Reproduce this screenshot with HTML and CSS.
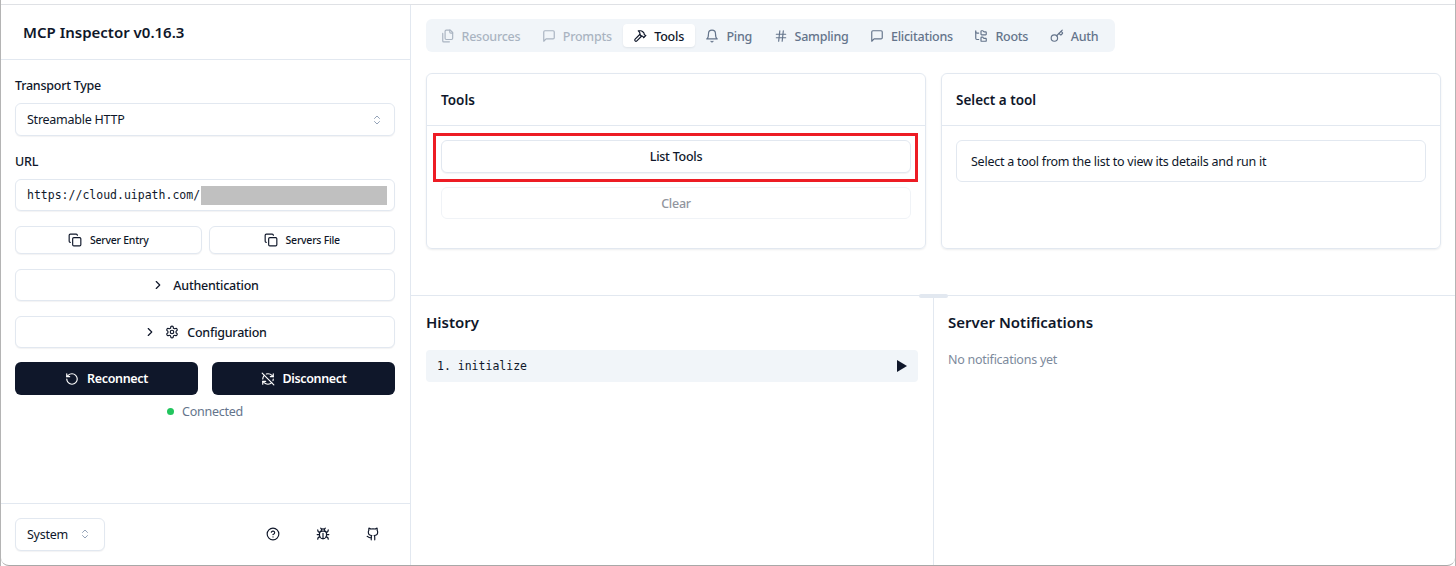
FILE: index.html
```html
<!DOCTYPE html>
<html lang="en">
  <head>
    <meta charset="UTF-8" />
    <title>MCP Inspector</title>
    <link rel="stylesheet" href="styles.css">
  </head>
  <body>
    <svg class="sprite" xmlns="http://www.w3.org/2000/svg">
      <symbol id="i-copy" viewBox="0 0 24 24"><rect x="8" y="8" width="14" height="14" rx="2"/><path d="M4 16c-1.1 0-2-.9-2-2V4c0-1.1.9-2 2-2h10c1.1 0 2 .9 2 2"/></symbol>
      <symbol id="i-files" viewBox="0 0 24 24"><path d="M20 7h-3a2 2 0 0 1-2-2V2"/><path d="M9 18a2 2 0 0 1-2-2V4a2 2 0 0 1 2-2h7l4 4v10a2 2 0 0 1-2 2Z"/><path d="M3 7.6v12.8A1.6 1.6 0 0 0 4.6 22h9.8"/></symbol>
      <symbol id="i-message" viewBox="0 0 24 24"><path d="M21 15a2 2 0 0 1-2 2H7l-4 4V5a2 2 0 0 1 2-2h14a2 2 0 0 1 2 2z"/></symbol>
      <symbol id="i-hammer" viewBox="0 0 24 24"><path d="m15 12-8.373 8.373a1 1 0 1 1-3-3L12 9"/><path d="m18 15 4-4"/><path d="m21.5 11.5-1.914-1.914A2 2 0 0 1 19 8.172V7l-2.26-2.26a6 6 0 0 0-4.202-1.756L9 2.96l.92.82A6.18 6.18 0 0 1 12 8.4V10l2 2h1.172a2 2 0 0 1 1.414.586L18.5 14.5"/></symbol>
      <symbol id="i-bell" viewBox="0 0 24 24"><path d="M6 8a6 6 0 0 1 12 0c0 7 3 9 3 9H3s3-2 3-9"/><path d="M10.3 21a1.94 1.94 0 0 0 3.4 0"/></symbol>
      <symbol id="i-hash" viewBox="0 0 24 24"><path d="M4 9h16"/><path d="M4 15h16"/><path d="M10 3 8 21"/><path d="M16 3l-2 18"/></symbol>
      <symbol id="i-tree" viewBox="0 0 24 24"><path d="M20 10a1 1 0 0 0 1-1V6a1 1 0 0 0-1-1h-2.5a1 1 0 0 1-.8-.4l-.9-1.2A1 1 0 0 0 15 3h-2a1 1 0 0 0-1 1v5a1 1 0 0 0 1 1Z"/><path d="M20 21a1 1 0 0 0 1-1v-3a1 1 0 0 0-1-1h-2.9a1 1 0 0 1-.88-.55l-.42-.85a1 1 0 0 0-.92-.6H13a1 1 0 0 0-1 1v5a1 1 0 0 0 1 1Z"/><path d="M3 5a2 2 0 0 0 2 2h3"/><path d="M3 3v13a2 2 0 0 0 2 2h3"/></symbol>
      <symbol id="i-key" viewBox="0 0 24 24"><path d="m15.5 7.5 2.3 2.3a1 1 0 0 0 1.4 0l2.1-2.1a1 1 0 0 0 0-1.4L19 4"/><path d="m21 2-9.6 9.6"/><circle cx="7.5" cy="15.5" r="5.5"/></symbol>
      <symbol id="i-updown" viewBox="0 0 24 24"><path d="m7 15 5 5 5-5"/><path d="m7 9 5-5 5 5"/></symbol>
      <symbol id="i-chevron" viewBox="0 0 24 24"><path d="m9 18 6-6-6-6"/></symbol>
      <symbol id="i-settings" viewBox="0 0 24 24"><path d="M12.22 2h-.44a2 2 0 0 0-2 2v.18a2 2 0 0 1-1 1.73l-.43.25a2 2 0 0 1-2 0l-.15-.08a2 2 0 0 0-2.73.73l-.22.38a2 2 0 0 0 .73 2.73l.15.1a2 2 0 0 1 1 1.72v.51a2 2 0 0 1-1 1.74l-.15.09a2 2 0 0 0-.73 2.73l.22.38a2 2 0 0 0 2.73.73l.15-.08a2 2 0 0 1 2 0l.43.25a2 2 0 0 1 1 1.73V20a2 2 0 0 0 2 2h.44a2 2 0 0 0 2-2v-.18a2 2 0 0 1 1-1.73l.43-.25a2 2 0 0 1 2 0l.15.08a2 2 0 0 0 2.73-.73l.22-.39a2 2 0 0 0-.73-2.73l-.15-.08a2 2 0 0 1-1-1.74v-.5a2 2 0 0 1 1-1.74l.15-.09a2 2 0 0 0 .73-2.73l-.22-.38a2 2 0 0 0-2.73-.73l-.15.08a2 2 0 0 1-2 0l-.43-.25a2 2 0 0 1-1-1.73V4a2 2 0 0 0-2-2z"/><circle cx="12" cy="12" r="3"/></symbol>
      <symbol id="i-rotate" viewBox="0 0 24 24"><path d="M3 12a9 9 0 1 0 9-9 9.75 9.75 0 0 0-6.74 2.74L3 8"/><path d="M3 3v5h5"/></symbol>
      <symbol id="i-refresh-off" viewBox="0 0 24 24"><path d="M21 8L18.74 5.74A9.75 9.75 0 0 0 12 3C11 3 10.03 3.16 9.13 3.47"/><path d="M8 16H3v5"/><path d="M3 12C3 9.51 4 7.26 5.64 5.64"/><path d="m3 16 2.26 2.26A9.75 9.75 0 0 0 12 21c2.49 0 4.74-1 6.36-2.64"/><path d="M21 12c0 1-.16 1.97-.47 2.87"/><path d="M21 3v5h-5"/><path d="M22 22 2 2"/></symbol>
      <symbol id="i-help" viewBox="0 0 24 24"><circle cx="12" cy="12" r="10"/><path d="M9.09 9a3 3 0 0 1 5.83 1c0 2-3 3-3 3"/><path d="M12 17h.01"/></symbol>
      <symbol id="i-bug" viewBox="0 0 24 24"><path d="m8 2 1.88 1.88"/><path d="M14.12 3.88 16 2"/><path d="M9 7.13v-1a3.003 3.003 0 1 1 6 0v1"/><path d="M12 20c-3.3 0-6-2.7-6-6v-3a4 4 0 0 1 4-4h4a4 4 0 0 1 4 4v3c0 3.3-2.7 6-6 6"/><path d="M12 20v-9"/><path d="M6.53 9C4.6 8.8 3 7.1 3 5"/><path d="M6 13H2"/><path d="M3 21c0-2.1 1.7-3.9 3.8-4"/><path d="M20.97 5c0 2.1-1.6 3.8-3.5 4"/><path d="M22 13h-4"/><path d="M17.2 17c2.1.1 3.8 1.9 3.8 4"/></symbol>
      <symbol id="i-github" viewBox="0 0 24 24"><path d="M15 22v-4a4.8 4.8 0 0 0-1-3.5c3 0 6-2 6-5.5.08-1.25-.27-2.48-1-3.5.28-1.15.28-2.35 0-3.5 0 0-1 0-3 1.5-2.64-.5-5.36-.5-8 0C6 2 5 2 5 2c-.3 1.15-.3 2.35 0 3.5A5.403 5.403 0 0 0 4 9c0 3.5 3 5.5 6 5.5-.39.49-.68 1.05-.85 1.65-.17.6-.22 1.23-.15 1.85v4"/><path d="M9 18c-4.51 2-5-2-7-2"/></symbol>
    </svg>

    <div class="window">
      <aside class="sidebar">
        <div class="brand">MCP Inspector v0.16.3</div>

        <div class="side_body">
          <label class="field_label">Transport Type</label>
          <div class="box select">
            <span>Streamable HTTP</span>
            <svg class="ico ico_sm muted"><use href="#i-updown"/></svg>
          </div>

          <label class="field_label url_label">URL</label>
          <div class="box url_box">
            <span class="mono">https://cloud.uipath.com/</span>
            <span class="redact"></span>
          </div>

          <div class="copy_row">
            <button class="btn btn_small"><svg class="ico"><use href="#i-copy"/></svg>Server Entry</button>
            <button class="btn btn_small"><svg class="ico"><use href="#i-copy"/></svg>Servers File</button>
          </div>

          <button class="btn btn_section"><svg class="ico"><use href="#i-chevron"/></svg>Authentication</button>
          <button class="btn btn_section"><svg class="ico"><use href="#i-chevron"/></svg><svg class="ico"><use href="#i-settings"/></svg>Configuration</button>

          <div class="connect_row">
            <button class="btn_dark"><svg class="ico"><use href="#i-rotate"/></svg>Reconnect</button>
            <button class="btn_dark"><svg class="ico"><use href="#i-refresh-off"/></svg>Disconnect</button>
          </div>

          <div class="status"><span class="dot"></span>Connected</div>
        </div>

        <div class="side_foot">
          <div class="box theme">
            <span>System</span>
            <svg class="ico ico_sm muted"><use href="#i-updown"/></svg>
          </div>
          <div class="foot_icons">
            <svg class="ico"><use href="#i-help"/></svg>
            <svg class="ico"><use href="#i-bug"/></svg>
            <svg class="ico"><use href="#i-github"/></svg>
          </div>
        </div>
      </aside>

      <main class="main">
        <div class="top">
          <nav class="tab_host">
            <div class="tab off"><svg class="ico"><use href="#i-files"/></svg>Resources</div>
            <div class="tab off"><svg class="ico"><use href="#i-message"/></svg>Prompts</div>
            <div class="tab on"><svg class="ico"><use href="#i-hammer"/></svg>Tools</div>
            <div class="tab"><svg class="ico"><use href="#i-bell"/></svg>Ping</div>
            <div class="tab"><svg class="ico"><use href="#i-hash"/></svg>Sampling</div>
            <div class="tab"><svg class="ico"><use href="#i-message"/></svg>Elicitations</div>
            <div class="tab"><svg class="ico"><use href="#i-tree"/></svg>Roots</div>
            <div class="tab"><svg class="ico"><use href="#i-key"/></svg>Auth</div>
          </nav>

          <div class="cards">
            <section class="card">
              <h3 class="card_head">Tools</h3>
              <div class="card_body">
                <div class="list_wrap">
                  <button class="btn btn_wide">List Tools</button>
                  <span class="mark"></span>
                </div>
                <button class="btn btn_clear">Clear</button>
              </div>
            </section>
            <section class="card">
              <h3 class="card_head">Select a tool</h3>
              <div class="card_body">
                <div class="notice">Select a tool from the list to view its details and run it</div>
              </div>
            </section>
          </div>
        </div>

        <div class="bottom">
          <span class="handle"></span>
          <section class="pane pane_left">
            <h2 class="pane_title">History</h2>
            <div class="history_row">
              <span class="mono">1. initialize</span>
              <span class="arrow"></span>
            </div>
          </section>
          <section class="pane">
            <h2 class="pane_title">Server Notifications</h2>
            <p class="empty">No notifications yet</p>
          </section>
        </div>
      </main>
    </div>
  </body>
</html>
```

FILE: styles.css
```css
* {
  box-sizing: border-box;
}

html,
body {
  height: 100%;
  margin: 0;
  overflow: hidden;
  background: #fff;
}

body {
  padding-top: 4px;
  border-left: 1px solid #b4b4b4;
  border-right: 1px solid #b4b4b4;
  font-family: "Noto Sans", "Liberation Sans", sans-serif;
  font-size: 12.5px;
  letter-spacing: -0.25px;
  color: #0f172a;
}

.sprite {
  display: none;
}

.ico {
  width: 14px;
  height: 14px;
  flex: none;
  fill: none;
  stroke: currentColor;
  stroke-width: 2;
  stroke-linecap: round;
  stroke-linejoin: round;
}

.ico_sm {
  width: 12px;
  height: 12px;
}

.muted {
  color: #94a3b8;
}

.mono {
  font-family: "DejaVu Sans Mono", monospace;
  font-size: 11.5px;
  letter-spacing: 0;
}

.window {
  display: flex;
  height: 562px;
  border-top: 1px solid #dfe1e5;
  border-bottom: 1px solid #a8a8a8;
  border-radius: 0 0 8px 8px;
  overflow: hidden;
}

/* sidebar */
.sidebar {
  display: flex;
  flex-direction: column;
  width: 410px;
  flex: none;
  border-right: 1px solid #e2e8f0;
}

.brand {
  height: 55px;
  padding: 17px 0 0 22px;
  border-bottom: 1px solid #e2e8f0;
  font-size: 15px;
  font-weight: 600;
  line-height: 20px;
  letter-spacing: 0;
}

.side_body {
  flex: 1;
  padding: 17px 15px 0 14px;
}

.field_label {
  display: block;
  height: 18px;
  margin-bottom: 8px;
  font-weight: 500;
  line-height: 18px;
}

.url_label {
  margin-top: 17px;
}

.box {
  display: flex;
  align-items: center;
  border: 1px solid #e2e8f0;
  border-radius: 6px;
  background: #fff;
  box-shadow: 0 1px 1px rgba(15, 23, 42, 0.05);
}

.select {
  justify-content: space-between;
  height: 33px;
  padding: 0 11px;
}

.url_box {
  height: 32px;
  padding: 0 7px 0 11px;
}

.redact {
  width: 186px;
  height: 19px;
  margin-left: 1px;
  background: #c0c0c0;
}

.btn {
  display: flex;
  align-items: center;
  justify-content: center;
  width: 100%;
  border: 1px solid #e2e8f0;
  border-radius: 6px;
  background: #fff;
  box-shadow: 0 1px 1px rgba(15, 23, 42, 0.05);
  font-family: inherit;
  font-size: 12.5px;
  font-weight: 500;
  letter-spacing: inherit;
  color: #0f172a;
  padding: 0;
}

.copy_row {
  display: flex;
  gap: 7px;
  margin-top: 15px;
}

.btn_small {
  gap: 8px;
  height: 28px;
  font-size: 10.5px;
}

.btn_section {
  gap: 8px;
  height: 32px;
  margin-top: 15px;
}

.connect_row {
  display: flex;
  gap: 14px;
  margin-top: 14px;
}

.btn_dark {
  display: flex;
  align-items: center;
  justify-content: center;
  gap: 8px;
  width: 100%;
  height: 33px;
  padding: 0;
  border: 0;
  border-radius: 6px;
  background: #0f172a;
  font-family: inherit;
  font-size: 12.5px;
  font-weight: 600;
  letter-spacing: -0.35px;
  color: #fff;
}

.status {
  display: flex;
  align-items: center;
  justify-content: center;
  gap: 8px;
  height: 18px;
  margin-top: 7px;
  color: #64748b;
}

.dot {
  width: 7px;
  height: 7px;
  border-radius: 50%;
  background: #22c55e;
}

.side_foot {
  display: flex;
  align-items: center;
  justify-content: space-between;
  height: 62px;
  padding: 0 14px 1px;
  border-top: 1px solid #e2e8f0;
}

.theme {
  justify-content: space-between;
  width: 90px;
  height: 33px;
  padding: 0 13px 0 11px;
}

.foot_icons {
  display: flex;
  gap: 36px;
  padding-right: 16px;
  padding-bottom: 1px;
}

/* main */
.main {
  display: flex;
  flex-direction: column;
  flex: 1;
  min-width: 0;
}

.top {
  height: 290px;
  padding: 14px 14px 0 15px;
}

.tab_host {
  display: flex;
  align-items: center;
  width: 689px;
  height: 33px;
  padding: 0 3.75px;
  border-radius: 6px;
  background: #f1f5f9;
  color: #64748b;
}

.tab {
  display: flex;
  align-items: center;
  gap: 7px;
  height: 23px;
  padding: 1px 10.75px 0;
  border-radius: 4px;
  font-weight: 500;
  white-space: nowrap;
}

.tab.off {
  opacity: 0.5;
}

.tab.on {
  background: #fff;
  color: #0f172a;
  box-shadow: 0 1px 2px rgba(15, 23, 42, 0.08);
}

.cards {
  display: grid;
  grid-template-columns: 500px 1fr;
  gap: 15px;
  margin-top: 21px;
}

.card {
  height: 176px;
  border: 1px solid #e2e8f0;
  border-radius: 6px;
  box-shadow: 0 1px 2px rgba(15, 23, 42, 0.08);
}

.card_head {
  height: 52px;
  margin: 0;
  padding: 17px 0 0 14px;
  border-bottom: 1px solid #e2e8f0;
  font-size: 13.5px;
  font-weight: 600;
  line-height: 18px;
  letter-spacing: 0;
}

.card_body {
  display: flex;
  flex-direction: column;
  gap: 14px;
  padding: 14px 14px 0;
}

.list_wrap {
  position: relative;
}

.btn_wide {
  height: 33px;
}

/* the annotation drawn over the screenshot */
.mark {
  position: absolute;
  top: -7px;
  right: -7px;
  bottom: -9px;
  left: -8px;
  border: 3px solid #ed1c24;
}

.btn_clear {
  height: 32px;
  color: #91959e;
  border-color: #f0f3f7;
  box-shadow: none;
}

.notice {
  display: flex;
  align-items: center;
  height: 42px;
  padding: 0 14px;
  border: 1px solid #e2e8f0;
  border-radius: 6px;
}

.bottom {
  position: relative;
  display: flex;
  flex: 1;
  border-top: 1px solid #e2e8f0;
}

.handle {
  position: absolute;
  top: -2px;
  left: 508px;
  width: 29px;
  height: 4px;
  border-radius: 2px;
  background: #e2e8f0;
}

.pane {
  flex: 1;
  padding: 16px 15px 0 14px;
}

.pane_left {
  flex: none;
  width: 523px;
  padding-left: 15px;
  border-right: 1px solid #e2e8f0;
}

.pane_title {
  margin: 0;
  font-size: 15px;
  font-weight: 600;
  line-height: 20px;
  letter-spacing: 0;
}

.history_row {
  display: flex;
  align-items: center;
  justify-content: space-between;
  height: 32px;
  margin-top: 18px;
  padding: 0 11px;
  border-radius: 4px;
  background: #f1f5f9;
}

.arrow {
  width: 0;
  height: 0;
  border-top: 6px solid transparent;
  border-bottom: 6px solid transparent;
  border-left: 10px solid #0f172a;
}

.empty {
  margin: 19px 0 0;
  color: #7d8a9c;
}
```
